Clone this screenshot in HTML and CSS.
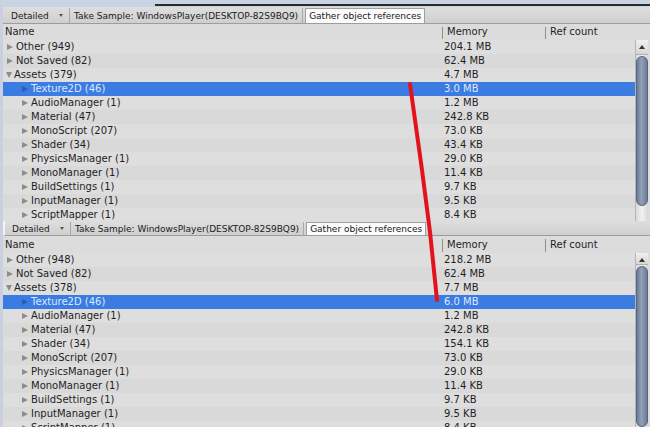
FILE: index.html
```html
<!DOCTYPE html>
<html lang="en">
<head>
<meta charset="UTF-8" />
<meta name="viewport" content="width=device-width, initial-scale=1" />
<title>Memory profiler snapshots</title>
<link rel="stylesheet" href="styles.css">
</head>
<body>
<div class="shot">

<section class="panel panel-top">
  <div class="strip"><span class="strip-line"></span></div>
  <div class="toolbar">
    <span class="tb-btn tb-drop">Detailed <i class="caret"></i></span>
    <span class="tb-btn">Take Sample: WindowsPlayer(DESKTOP-82S9BQ9)</span>
    <span class="tb-btn tb-on">Gather object references</span>
  </div>
  <div class="head">
    <span class="h-name">Name</span>
    <span class="h-col">Memory</span>
    <span class="h-col">Ref count</span>
  </div>
  <div class="body">
    <div class="rows">
      <div class="row"><span class="name"><i class="tri"></i>Other (949)</span><span class="mem">204.1 MB</span><span></span></div>
      <div class="row"><span class="name"><i class="tri"></i>Not Saved (82)</span><span class="mem">62.4 MB</span><span></span></div>
      <div class="row"><span class="name"><i class="tri open"></i>Assets (379)</span><span class="mem">4.7 MB</span><span></span></div>
      <div class="row sel"><span class="name sub"><i class="tri"></i>Texture2D (46)</span><span class="mem">3.0 MB</span><span></span></div>
      <div class="row"><span class="name sub"><i class="tri"></i>AudioManager (1)</span><span class="mem">1.2 MB</span><span></span></div>
      <div class="row"><span class="name sub"><i class="tri"></i>Material (47)</span><span class="mem">242.8 KB</span><span></span></div>
      <div class="row"><span class="name sub"><i class="tri"></i>MonoScript (207)</span><span class="mem">73.0 KB</span><span></span></div>
      <div class="row"><span class="name sub"><i class="tri"></i>Shader (34)</span><span class="mem">43.4 KB</span><span></span></div>
      <div class="row"><span class="name sub"><i class="tri"></i>PhysicsManager (1)</span><span class="mem">29.0 KB</span><span></span></div>
      <div class="row"><span class="name sub"><i class="tri"></i>MonoManager (1)</span><span class="mem">11.4 KB</span><span></span></div>
      <div class="row"><span class="name sub"><i class="tri"></i>BuildSettings (1)</span><span class="mem">9.7 KB</span><span></span></div>
      <div class="row"><span class="name sub"><i class="tri"></i>InputManager (1)</span><span class="mem">9.5 KB</span><span></span></div>
      <div class="row"><span class="name sub"><i class="tri"></i>ScriptMapper (1)</span><span class="mem">8.4 KB</span><span></span></div>
      <div class="row"><span class="name sub"></span><span class="mem">5.7 KB</span><span></span></div>
    </div>
    <div class="scroll">
      <span class="sc-up"></span>
      <span class="sc-thumb thumb-top"></span>
      <span class="sc-track"></span>
    </div>
  </div>
</section>

<section class="panel panel-bottom">
  <div class="toolbar">
    <span class="tb-btn tb-drop">Detailed <i class="caret"></i></span>
    <span class="tb-btn">Take Sample: WindowsPlayer(DESKTOP-82S9BQ9)</span>
    <span class="tb-btn tb-on">Gather object references</span>
  </div>
  <div class="head">
    <span class="h-name">Name</span>
    <span class="h-col">Memory</span>
    <span class="h-col">Ref count</span>
  </div>
  <div class="body">
    <div class="rows">
      <div class="row"><span class="name"><i class="tri"></i>Other (948)</span><span class="mem">218.2 MB</span><span></span></div>
      <div class="row"><span class="name"><i class="tri"></i>Not Saved (82)</span><span class="mem">62.4 MB</span><span></span></div>
      <div class="row"><span class="name"><i class="tri open"></i>Assets (378)</span><span class="mem">7.7 MB</span><span></span></div>
      <div class="row sel"><span class="name sub"><i class="tri"></i>Texture2D (46)</span><span class="mem">6.0 MB</span><span></span></div>
      <div class="row"><span class="name sub"><i class="tri"></i>AudioManager (1)</span><span class="mem">1.2 MB</span><span></span></div>
      <div class="row"><span class="name sub"><i class="tri"></i>Material (47)</span><span class="mem">242.8 KB</span><span></span></div>
      <div class="row"><span class="name sub"><i class="tri"></i>Shader (34)</span><span class="mem">154.1 KB</span><span></span></div>
      <div class="row"><span class="name sub"><i class="tri"></i>MonoScript (207)</span><span class="mem">73.0 KB</span><span></span></div>
      <div class="row"><span class="name sub"><i class="tri"></i>PhysicsManager (1)</span><span class="mem">29.0 KB</span><span></span></div>
      <div class="row"><span class="name sub"><i class="tri"></i>MonoManager (1)</span><span class="mem">11.4 KB</span><span></span></div>
      <div class="row"><span class="name sub"><i class="tri"></i>BuildSettings (1)</span><span class="mem">9.7 KB</span><span></span></div>
      <div class="row"><span class="name sub"><i class="tri"></i>InputManager (1)</span><span class="mem">9.5 KB</span><span></span></div>
      <div class="row"><span class="name sub"><i class="tri"></i>ScriptMapper (1)</span><span class="mem">8.4 KB</span><span></span></div>
    </div>
    <div class="scroll">
      <span class="sc-up"></span>
      <span class="sc-thumb thumb-bottom"></span>
    </div>
  </div>
</section>

<!-- hand drawn marker joining the two Texture2D values -->
<svg class="marker" width="650" height="427" viewBox="0 0 650 427">
  <path d="M410 84 L422 170 L430 232 L437 300" fill="none" stroke="#e3121c" stroke-width="4" stroke-linecap="round" />
</svg>

</div>
</body>
</html>
```

FILE: styles.css
```css
html, body {
  margin: 0;
  padding: 0;
}
body {
  font-family: "DejaVu Sans", Verdana, sans-serif;
  font-size: 10px;
  color: #1e1e1e;
  background: #c9d1e1;
}
.shot {
  position: relative;
  width: 650px;
  height: 427px;
  overflow: hidden;
}

.panel {
  display: flex;
  flex-direction: column;
  margin-left: 3px;
  background: #dcdcdc;
  overflow: hidden;
}
.panel-top {
  height: 221px;
}
.panel-bottom {
  height: 206px;
}

.strip {
  height: 7px;
  margin-left: -3px;
  background: #c8d3e4;
  position: relative;
}
.strip-line {
  position: absolute;
  left: 155px;
  right: 0;
  top: 4px;
  height: 2px;
  background: #2b2b2b;
}

.toolbar {
  display: flex;
  align-items: stretch;
  height: 15px;
  padding-top: 1px;
  background: linear-gradient(#dedede, #cfcfcf);
  border-bottom: 1px solid #9d9d9d;
  font-size: 9px;
  color: #202020;
}
.panel-bottom .toolbar {
  height: 13px;
  border-left: 2px solid #f4f4f4;
}
.tb-btn {
  display: flex;
  align-items: center;
  padding: 0 4px;
  border-right: 1px solid #a9a9a9;
  white-space: nowrap;
}
.tb-drop {
  width: 54px;
  padding-left: 8px;
  justify-content: space-between;
}
.panel-bottom .tb-drop {
  padding-left: 7px;
}
.caret {
  width: 0;
  height: 0;
  border-left: 2px solid transparent;
  border-right: 2px solid transparent;
  border-top: 3px solid #555;
  margin-right: 2px;
}
.tb-on {
  background: #fbfbfb;
  border: 1px solid #a0a0a0;
  border-bottom: none;
  margin-left: 2px;
  padding: 0 3px;
}

.head {
  display: grid;
  grid-template-columns: 439px 103px 1fr;
  height: 16px;
  line-height: 16px;
  font-size: 10px;
}
.panel-bottom .head {
  height: 17px;
  line-height: 17px;
}
.h-name {
  padding-left: 2px;
}
.h-col {
  position: relative;
  padding-left: 5px;
}
.h-col::before {
  content: "";
  position: absolute;
  left: 0;
  top: 3px;
  bottom: 1px;
  width: 1px;
  background: #8e8e8e;
}

.body {
  display: flex;
  flex: 1;
  min-height: 0;
}
.rows {
  flex: 1;
}
.row {
  display: grid;
  grid-template-columns: 439px 103px 1fr;
  height: 14px;
  line-height: 14px;
  white-space: nowrap;
}
.row:nth-child(odd) {
  background: #dedede;
}
.row:nth-child(even) {
  background: #d9d9d9;
}
.row.sel {
  background: #3b7ce2;
  color: #dbe8ff;
}
.name {
  display: flex;
  align-items: center;
  padding-left: 4px;
}
.name.sub {
  padding-left: 19px;
}
.mem {
  padding-left: 2px;
}

.tri {
  width: 0;
  height: 0;
  border-top: 3.5px solid transparent;
  border-bottom: 3.5px solid transparent;
  border-left: 6px solid #8c8c8c;
  margin-right: 3px;
}
.tri.open {
  border-left: 3.5px solid transparent;
  border-right: 3.5px solid transparent;
  border-top: 6px solid #8c8c8c;
  border-bottom: none;
  margin-right: 2px;
  margin-left: -1px;
}
.sel .tri {
  border-left-color: #2a5db0;
}

.scroll {
  display: flex;
  flex-direction: column;
  width: 12px;
  margin-right: 2px;
  background: linear-gradient(90deg, #d8d8d8, #f2f2f2 50%, #d8d8d8);
  border-left: 1px solid #b5b5b5;
}
.sc-up {
  position: relative;
  height: 14px;
  background: linear-gradient(#f0f0f0, #d6d6d6);
  border-bottom: 1px solid #b0b0b0;
}
.sc-up::after {
  content: "";
  position: absolute;
  left: 3px;
  top: 5px;
  border-left: 3px solid transparent;
  border-right: 3px solid transparent;
  border-bottom: 4px solid #333;
}
.sc-thumb {
  margin: 1px 0 0;
  border-radius: 6px;
  background: linear-gradient(90deg, #6b7c96, #91a1b8 45%, #6b7c96);
  border: 1px solid #56657c;
}
.thumb-top {
  height: 148px;
}
.thumb-bottom {
  height: 200px;
}
.sc-track {
  flex: 1;
}

.marker {
  position: absolute;
  left: 0;
  top: 0;
  pointer-events: none;
}
```
